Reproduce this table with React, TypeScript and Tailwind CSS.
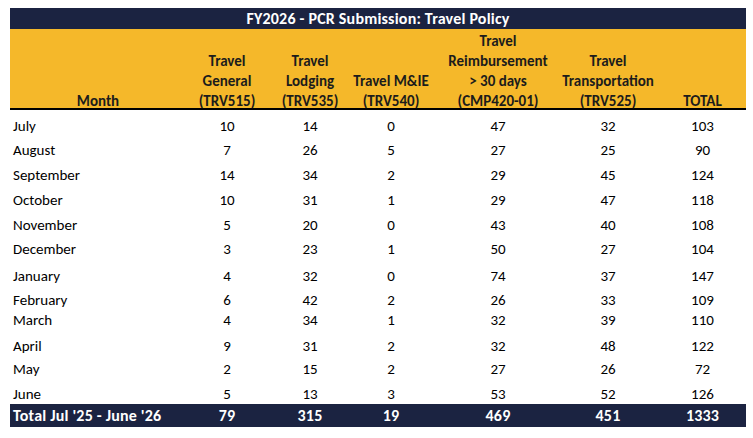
import React from "react";

type Row = { m: string; v: number[]; h: string };

const rows: Row[] = [
  { m: "July", v: [10, 14, 0, 47, 32, 103], h: "h-[26px]" },
  { m: "August", v: [7, 26, 5, 27, 25, 90], h: "h-[24px]" },
  { m: "September", v: [14, 34, 2, 29, 45, 124], h: "h-[25px]" },
  { m: "October", v: [10, 31, 1, 29, 47, 118], h: "h-[25px]" },
  { m: "November", v: [5, 20, 0, 43, 40, 108], h: "h-[25px]" },
  { m: "December", v: [3, 23, 1, 50, 27, 104], h: "h-[24px]" },
  { m: "January", v: [4, 32, 0, 74, 37, 147], h: "h-[27px]" },
  { m: "February", v: [6, 42, 2, 26, 33, 109], h: "h-[24px]" },
  { m: "March", v: [4, 34, 1, 32, 39, 110], h: "h-[20px]" },
  { m: "April", v: [9, 31, 2, 32, 48, 122], h: "h-[26px]" },
  { m: "May", v: [2, 15, 2, 27, 26, 72], h: "h-[23px]" },
  { m: "June", v: [5, 13, 3, 53, 52, 126], h: "h-[25px]" },
];

const totals = [79, 315, 19, 469, 451, 1333];

const grid = "grid grid-cols-[176px_82px_84px_78px_136px_84px_96px]";

const headers: string[][] = [
  ["Travel", "General", "(TRV515)"],
  ["Travel", "Lodging", "(TRV535)"],
  ["Travel M&IE", "(TRV540)"],
  ["Travel", "Reimbursement", "> 30 days", "(CMP420-01)"],
  ["Travel", "Transportation", "(TRV525)"],
  ["TOTAL"],
];

export default function App() {
  return (
    <div
      className="w-[753px] h-[438px] bg-white pt-[8px] pl-[10px]"
      style={{ fontFamily: "Carlito, Calibri, Lato, 'Liberation Sans', sans-serif" }}
    >
      <div className="w-[736px]">
        <div className="h-[21px] bg-[#1b2341] text-white font-bold text-[16px] tracking-[0.2px] leading-[21px] text-center">
          FY2026 - PCR Submission: Travel Policy
        </div>
        <div className={`${grid} h-[79px] bg-[#f5b82a] text-[#1c1c1c] font-bold text-[15px] leading-[20px]`}>
          <div className="flex items-end justify-center">
            <div className="-mb-[3px]">Month</div>
          </div>
          {headers.map((lines, i) => (
            <div
              key={i}
              className={`flex flex-col items-center justify-end ${i === 5 ? "pl-[9px]" : ""}`}
            >
              <div className="-mb-[3px] flex flex-col items-center">
                {lines.map((l, j) => (
                  <div key={j} className="whitespace-nowrap">
                    {l}
                  </div>
                ))}
              </div>
            </div>
          ))}
        </div>
        <div className="h-[2px] bg-black" />
        {rows.map((r) => (
          <div key={r.m} className={`${grid} ${r.h} text-[15px] leading-[20px] text-black`}>
            <div className="flex items-end pl-[3px]">{r.m}</div>
            {r.v.map((n, i) => (
              <div
                key={i}
                className={`flex items-end justify-center ${i === 5 ? "pl-[9px]" : ""}`}
              >
                {n}
              </div>
            ))}
          </div>
        ))}
        <div className={`${grid} h-[23px] bg-[#1b2341] text-white font-bold text-[16px] tracking-[0.2px] leading-[20px]`}>
          <div className="flex items-center pl-[3px] whitespace-nowrap">Total Jul '25 - June '26</div>
          {totals.map((n, i) => (
            <div
              key={i}
              className={`flex items-center justify-center ${i === 5 ? "pl-[9px]" : ""}`}
            >
              {n}
            </div>
          ))}
        </div>
      </div>
    </div>
  );
}
